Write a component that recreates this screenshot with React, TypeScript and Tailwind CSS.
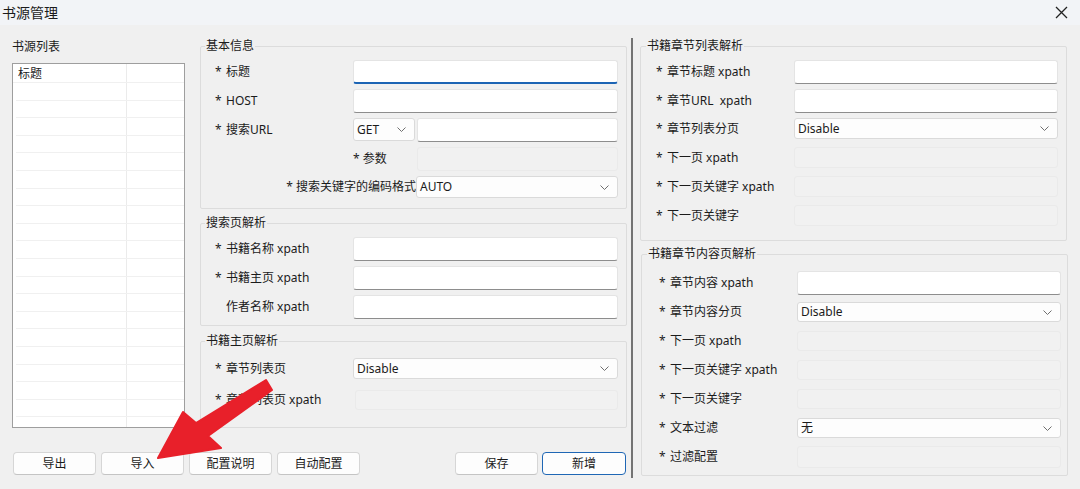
import type { ReactNode } from "react";

const FONT = { fontFamily: '"Noto Sans", "Noto Sans CJK SC", sans-serif' };

function Chevron() {
  return (
    <svg width="9" height="5" viewBox="0 0 9 5" className="shrink-0">
      <path d="M0.5 0.5 L4.5 4.5 L8.5 0.5" fill="none" stroke="#6f6f6f" strokeWidth="1" />
    </svg>
  );
}

function TextInput({ focused = false }: { focused?: boolean }) {
  return (
    <div
      className={
        focused
          ? "h-[24px] w-full rounded-[3px] border border-[#e4e4e4] border-b-2 border-b-[#1c64b4] bg-white"
          : "h-[24px] w-full rounded-[3px] border border-[#e4e4e4] border-b-[#8d8d8d] bg-white"
      }
    />
  );
}

function Select({ value, h = "h-[21px]" }: { value: string; h?: string }) {
  return (
    <div
      className={`${h} flex w-full items-center justify-between rounded-[3px] border border-[#dadada] bg-[#fdfdfd] pl-[3px] pr-[8px]`}
    >
      <span className="leading-[16px]">{value}</span>
      <Chevron />
    </div>
  );
}

function Disabled({ h = "h-[21px]" }: { h?: string }) {
  return <div className={`${h} w-full rounded-[3px] border border-[#eaeaea] bg-[#f1f1f1]`} />;
}

function Label({ text, star = true }: { text: string; star?: boolean }) {
  return (
    <div className="w-[138px] shrink-0 whitespace-pre leading-[16px]">
      <span className={star ? "inline-block w-[11px]" : "invisible inline-block w-[11px]"}>*</span>
      {text}
    </div>
  );
}

function Row({ label, star = true, top = false, children }: { label: string; star?: boolean; top?: boolean; children: ReactNode }) {
  return (
    <div className={top ? "flex h-[24px] items-start" : "flex h-[24px] items-center"}>
      <div className={top ? "flex h-[21px] items-center" : ""}>
        <Label text={label} star={star} />
      </div>
      <div className="flex-1">{children}</div>
    </div>
  );
}

function Group({ title, className, legendMl, children }: { title: string; className: string; legendMl: string; children: ReactNode }) {
  return (
    <fieldset className={`min-w-0 rounded-[2px] border border-[#dcdcdc] ${className}`}>
      <legend className={`${legendMl} px-[1px] text-[12px] leading-[16px]`}>{title}</legend>
      {children}
    </fieldset>
  );
}

function Button({ text, primary = false, w = "w-[83px]" }: { text: string; primary?: boolean; w?: string }) {
  return (
    <div
      className={
        primary
          ? `${w} flex h-[23px] items-center justify-center rounded-[4px] border border-[#1f67b5] bg-[#fdfdfd]`
          : `${w} flex h-[23px] items-center justify-center rounded-[4px] border border-[#d6d6d6] border-b-[#c4c4c4] bg-[#fdfdfd]`
      }
    >
      {text}
    </div>
  );
}

export default function App() {
  const rows = Array.from({ length: 20 }, (_, i) => i);

  return (
    <div className="relative h-[489px] w-[1080px] overflow-hidden bg-[#f0f0f0] text-[12px] text-[#1b1b1b]" style={FONT}>
      {/* title bar */}
      <div className="flex h-[25px] items-center justify-between bg-[#f2f4f7] pl-[2px] pr-[12px]">
        <span className="text-[14px] leading-[18px]">书源管理</span>
        <svg width="13" height="13" viewBox="0 0 13 13">
          <path d="M1 1 L12 12 M12 1 L1 12" stroke="#222" strokeWidth="1.3" />
        </svg>
      </div>

      <div className="flex h-[464px] pt-[13px]">
        {/* left + middle */}
        <div className="ml-[12px] flex w-[615px] flex-col">
          <div className="flex items-start">
            <div className="w-[173px]">
              <div className="mt-[1px] leading-[16px]">书源列表</div>
              <div className="mt-[8px] h-[365px] overflow-hidden border border-[#9e9e9e] bg-white">
                <div className="flex h-[19px] border-b border-[#f0f0f0]">
                  <div className="w-[113px] pl-[5px] leading-[19px]">标题</div>
                  <div className="flex-1 border-l border-[#ebebeb]" />
                </div>
                {rows.map((r) => (
                  <div key={r} className="ml-[3px] flex h-[17.6px] border-b border-[#f0f0f0]">
                    <div className="w-[110px]" />
                    <div className="flex-1 border-l border-[#ebebeb]" />
                  </div>
                ))}
              </div>
            </div>

            <div className="ml-[15px] w-[427px]">
              <Group title="基本信息" className="" legendMl="ml-[4px]">
                <div className="flex flex-col gap-[5px] pb-[10px] pl-[14px] pr-[8px] pt-[6px]">
                  <Row label="标题">
                    <TextInput focused />
                  </Row>
                  <Row label="HOST">
                    <TextInput />
                  </Row>
                  <Row label="搜索URL">
                    <div className="flex gap-[2px]">
                      <div className="w-[62px]">
                        <Select value="GET" h="h-[23px]" />
                      </div>
                      <div className="flex-1">
                        <TextInput />
                      </div>
                    </div>
                  </Row>
                  <div className="flex h-[24px] items-center">
                    <div className="w-[138px] shrink-0" />
                    <div className="w-[64px] shrink-0 leading-[16px]">* 参数</div>
                    <div className="flex-1">
                      <Disabled h="h-[24px]" />
                    </div>
                  </div>
                  <div className="flex h-[22px] items-center">
                    <div className="w-[201px] shrink-0 whitespace-nowrap text-right leading-[16px]">* 搜索关键字的编码格式</div>
                    <div className="flex-1">
                      <Select value="AUTO" h="h-[22px]" />
                    </div>
                  </div>
                </div>
              </Group>

              <Group title="搜索页解析" className="mt-[6px]" legendMl="ml-[4px]">
                <div className="flex flex-col gap-[5px] pb-[6px] pl-[14px] pr-[8px] pt-[6px]">
                  <Row label="书籍名称 xpath">
                    <TextInput />
                  </Row>
                  <Row label="书籍主页 xpath">
                    <TextInput />
                  </Row>
                  <Row label="作者名称 xpath" star={false}>
                    <TextInput />
                  </Row>
                </div>
              </Group>

              <Group title="书籍主页解析" className="mt-[7px]" legendMl="ml-[4px]">
                <div className="flex flex-col gap-[11px] pb-[17px] pl-[14px] pr-[8px] pt-[9px]">
                  <div className="flex h-[21px] items-center">
                    <Label text="章节列表页" />
                    <div className="flex-1">
                      <Select value="Disable" />
                    </div>
                  </div>
                  <div className="flex h-[20px] items-center">
                    <Label text="章节列表页 xpath" />
                    <div className="flex-1 pl-[2px]">
                      <Disabled h="h-[20px]" />
                    </div>
                  </div>
                </div>
              </Group>
            </div>
          </div>

          <div className="mt-[24px] flex justify-between px-[1px]">
            <div className="flex gap-[5px]">
              <Button text="导出" />
              <Button text="导入" />
              <Button text="配置说明" />
              <Button text="自动配置" />
            </div>
            <div className="flex gap-[4px]">
              <Button text="保存" />
              <Button text="新增" primary w="w-[84px]" />
            </div>
          </div>
        </div>

        {/* separator */}
        <div className="ml-[4px] h-[440px] w-[2px] bg-[#747474]" />

        {/* right column */}
        <div className="ml-[7px] w-[428px]">
          <Group title="书籍章节列表解析" className="w-[427px]" legendMl="ml-[5px]">
            <div className="flex flex-col gap-[5px] pb-[11px] pl-[15px] pr-[8px] pt-[6px]">
              <Row label="章节标题 xpath">
                <TextInput />
              </Row>
              <Row label="章节URL  xpath">
                <TextInput />
              </Row>
              <Row label="章节列表分页" top>
                <Select value="Disable" />
              </Row>
              <Row label="下一页 xpath" top>
                <Disabled />
              </Row>
              <Row label="下一页关键字 xpath" top>
                <Disabled />
              </Row>
              <Row label="下一页关键字" top>
                <Disabled />
              </Row>
            </div>
          </Group>

          <Group title="书籍章节内容页解析" className="ml-[1px] mt-[5px] w-[427px]" legendMl="ml-[5px]">
            <div className="flex flex-col gap-[5px] pb-[6px] pl-[17px] pr-[6px] pt-[9px]">
              <Row label="章节内容 xpath">
                <TextInput />
              </Row>
              <Row label="章节内容分页">
                <Select value="Disable" h="h-[20px]" />
              </Row>
              <Row label="下一页 xpath">
                <Disabled h="h-[20px]" />
              </Row>
              <Row label="下一页关键字 xpath">
                <Disabled h="h-[20px]" />
              </Row>
              <Row label="下一页关键字">
                <Disabled h="h-[20px]" />
              </Row>
              <Row label="文本过滤">
                <Select value="无" h="h-[20px]" />
              </Row>
              <Row label="过滤配置">
                <Disabled h="h-[22px]" />
              </Row>
            </div>
          </Group>
        </div>
      </div>

      {/* red annotation arrow */}
      <svg className="pointer-events-none absolute left-0 top-0" width="1080" height="489" viewBox="0 0 1080 489">
        <polygon
          points="158,458 183,412 196,423 266,380 272,390 208,436 221,448"
          fill="#e8202a"
          stroke="#e8202a"
          strokeWidth="2"
          strokeLinejoin="round"
        />
      </svg>
    </div>
  );
}
